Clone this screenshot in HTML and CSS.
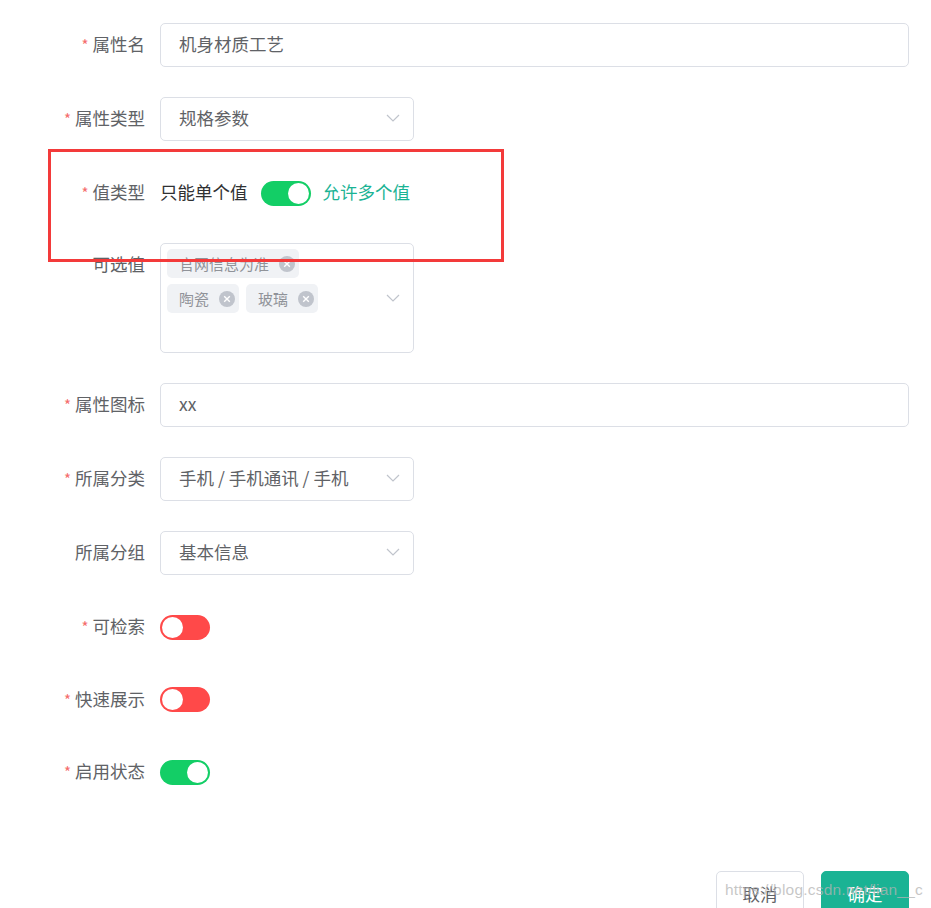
FILE: index.html
```html
<!DOCTYPE html>
<html lang="zh-CN">
<head>
<meta charset="utf-8">
<link rel="stylesheet" href="styles.css">
</head>
<body>
<div class="page">
  <div class="form">
    <div class="item">
      <div class="label req">属性名</div>
      <div class="content"><div class="input">机身材质工艺</div></div>
    </div>
    <div class="item">
      <div class="label req">属性类型</div>
      <div class="content"><div class="input select">规格参数<span class="arrow"><svg width="14" height="8" viewBox="0 0 14 8"><path d="M1 1l6 6 6-6" fill="none" stroke="#c0c4cc" stroke-width="1.2"/></svg></span></div></div>
    </div>
    <div class="item item-short">
      <div class="label req">值类型</div>
      <div class="content switch-line">
        <span class="sw-text">只能单个值</span>
        <span class="switch on"><span class="knob"></span></span>
        <span class="sw-text active">允许多个值</span>
      </div>
    </div>
    <div class="item">
      <div class="label">可选值</div>
      <div class="content">
        <div class="multi">
          <div class="tags">
            <span class="tag">官网信息为准<i class="close"><svg width="16" height="16" viewBox="0 0 16 16"><circle cx="8" cy="8" r="8" fill="#c0c4cc"/><path d="M5.2 5.2l5.6 5.6M10.8 5.2l-5.6 5.6" stroke="#fff" stroke-width="1.4"/></svg></i></span>
            <span class="tag">陶瓷<i class="close"><svg width="16" height="16" viewBox="0 0 16 16"><circle cx="8" cy="8" r="8" fill="#c0c4cc"/><path d="M5.2 5.2l5.6 5.6M10.8 5.2l-5.6 5.6" stroke="#fff" stroke-width="1.4"/></svg></i></span>
            <span class="tag">玻璃<i class="close"><svg width="16" height="16" viewBox="0 0 16 16"><circle cx="8" cy="8" r="8" fill="#c0c4cc"/><path d="M5.2 5.2l5.6 5.6M10.8 5.2l-5.6 5.6" stroke="#fff" stroke-width="1.4"/></svg></i></span>
          </div>
          <span class="arrow"><svg width="14" height="8" viewBox="0 0 14 8"><path d="M1 1l6 6 6-6" fill="none" stroke="#c0c4cc" stroke-width="1.2"/></svg></span>
        </div>
      </div>
    </div>
    <div class="item">
      <div class="label req">属性图标</div>
      <div class="content"><div class="input">xx</div></div>
    </div>
    <div class="item">
      <div class="label req">所属分类</div>
      <div class="content"><div class="input select">手机 / 手机通讯 / 手机<span class="arrow"><svg width="14" height="8" viewBox="0 0 14 8"><path d="M1 1l6 6 6-6" fill="none" stroke="#c0c4cc" stroke-width="1.2"/></svg></span></div></div>
    </div>
    <div class="item">
      <div class="label">所属分组</div>
      <div class="content"><div class="input select">基本信息<span class="arrow"><svg width="14" height="8" viewBox="0 0 14 8"><path d="M1 1l6 6 6-6" fill="none" stroke="#c0c4cc" stroke-width="1.2"/></svg></span></div></div>
    </div>
    <div class="item item-switch">
      <div class="label req">可检索</div>
      <div class="content switch-line"><span class="switch off"><span class="knob"></span></span></div>
    </div>
    <div class="item item-switch">
      <div class="label req">快速展示</div>
      <div class="content switch-line"><span class="switch off"><span class="knob"></span></span></div>
    </div>
    <div class="item item-switch">
      <div class="label req">启用状态</div>
      <div class="content switch-line"><span class="switch on"><span class="knob"></span></span></div>
    </div>
  </div>
  <div class="footer">
    <button class="btn">取消</button>
    <button class="btn primary">确定</button>
  </div>
  <div class="highlight"></div>
  <div class="watermark">https://blog.csdn.net/lian__c</div>
</div>
</body>
</html>
```
FILE: styles.css
```css
html, body {
  margin: 0;
  padding: 0;
  background: #fff;
}
body {
  font-family: "Noto Sans CJK SC", "Noto Sans", sans-serif;
  font-size: 17.5px;
  color: #606266;
  width: 931px;
  height: 908px;
  overflow: hidden;
}
.page {
  position: relative;
  height: 908px;
}
.form {
  padding: 23px 22px 0 0;
}
.item {
  display: flex;
  margin-bottom: 30px;
}
.item-short {
  margin-bottom: 28px;
}
.item-switch {
  margin-bottom: 28.5px;
}
.label {
  width: 145px;
  padding-right: 15px;
  text-align: right;
  line-height: 42px;
  height: 44px;
  flex: none;
  box-sizing: content-box;
}
.req::before {
  content: "*";
  color: #f56c6c;
  margin-right: 4px;
  font-size: 15px;
}
.content {
  flex: 1;
  min-width: 0;
}
.input {
  height: 44px;
  box-sizing: border-box;
  border: 1px solid #dcdfe6;
  border-radius: 5px;
  padding: 0 18px 1px;
  line-height: 40px;
  color: #606266;
  position: relative;
}
.select {
  width: 254px;
}
.arrow {
  position: absolute;
  right: 13px;
  top: 50%;
  margin-top: -5px;
  display: flex;
}
.switch-line {
  display: flex;
  align-items: center;
  height: 44px;
}
.sw-text {
  color: #303133;
  line-height: 42px;
  height: 44px;
}
.sw-text.active {
  color: #1ab394;
}
.switch {
  width: 50px;
  height: 25px;
  border-radius: 13px;
  display: inline-flex;
  align-items: center;
  padding: 0 2px;
  box-sizing: border-box;
  margin: 0 12px 0 13px;
}
.switch-line > .switch:first-child {
  margin-left: 0;
}
.switch .knob {
  width: 21px;
  height: 21px;
  border-radius: 50%;
  background: #fff;
}
.switch.on {
  background: #13ce66;
  justify-content: flex-end;
}
.switch.off {
  background: #ff4949;
  justify-content: flex-start;
}
.multi {
  width: 254px;
  height: 110px;
  box-sizing: border-box;
  border: 1px solid #dcdfe6;
  border-radius: 5px;
  position: relative;
  padding: 5px 40px 0 6px;
}
.multi .arrow {
  margin-top: -4px;
}
.tags {
  display: flex;
  flex-wrap: wrap;
  gap: 6px 7px;
}
.tag {
  display: inline-flex;
  align-items: center;
  height: 29px;
  padding: 0 4px 0 12px;
  background: #f0f2f5;
  border-radius: 5px;
  color: #909399;
  font-size: 15px;
}
.close {
  display: inline-flex;
  margin-left: 10px;
}
.footer {
  position: absolute;
  left: 716px;
  top: 871px;
  display: flex;
  gap: 17px;
}
.btn {
  height: 44px;
  width: 88px;
  box-sizing: border-box;
  border: 1px solid #dcdfe6;
  border-radius: 5px;
  background: #fff;
  color: #606266;
  font-family: inherit;
  font-size: 17.5px;
  padding: 0;
}
.btn.primary {
  background: #1ab394;
  border-color: #1ab394;
  color: #fff;
}
.highlight {
  position: absolute;
  left: 48px;
  top: 149px;
  width: 450px;
  height: 107px;
  border: 3px solid #f33a3a;
}
.watermark {
  position: absolute;
  left: 725px;
  top: 881px;
  font-family: "Liberation Sans", sans-serif;
  font-size: 15.5px;
  letter-spacing: 0.2px;
  color: rgba(180, 180, 180, 0.75);
  white-space: nowrap;
  pointer-events: none;
}
```
